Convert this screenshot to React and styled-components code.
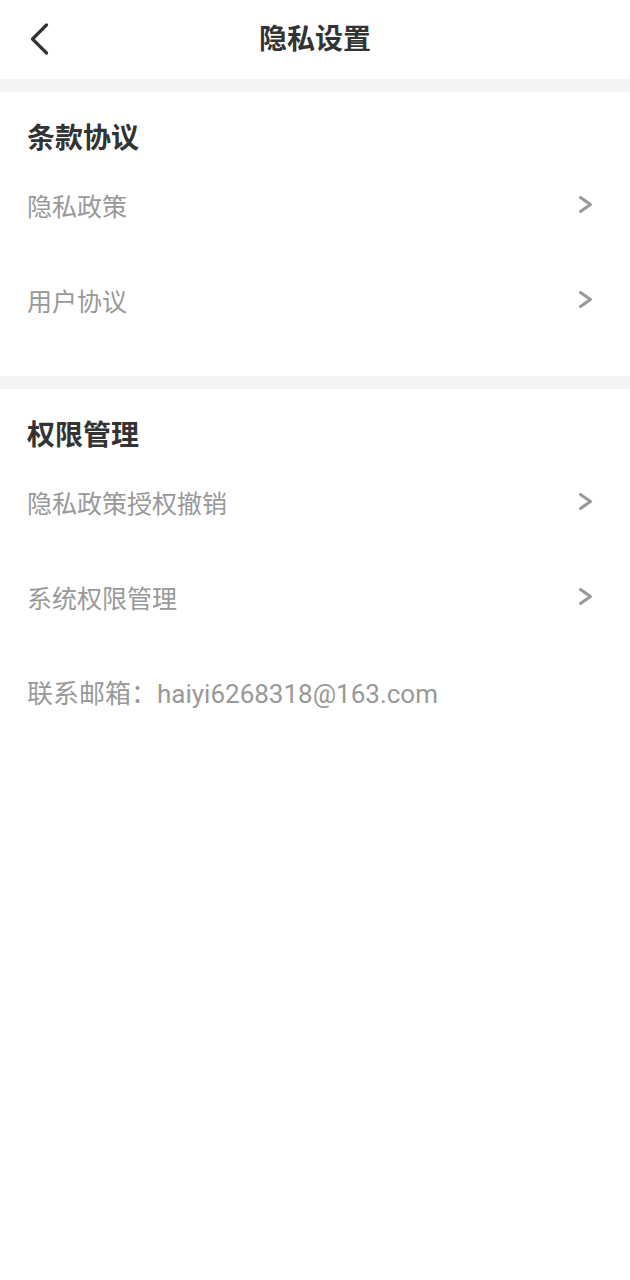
import React from 'react'
import styled, { createGlobalStyle } from 'styled-components'

const GlobalStyle = createGlobalStyle`
  html, body {
    margin: 0;
    padding: 0;
    background: #fff;
  }
  body {
    font-family: Roboto, "Noto Sans CJK SC", "Noto Sans", sans-serif;
  }
`

const Page = styled.div`
  width: 630px;
  min-height: 1280px;
  background: #fff;
`

const Header = styled.div`
  height: 79px;
  display: flex;
  align-items: center;
  justify-content: center;
  position: relative;
`

const BackButton = styled.div`
  position: absolute;
  left: 30px;
  top: 23px;
  width: 19px;
  height: 32px;
  display: flex;
`

const HeaderTitle = styled.h1`
  margin: 0;
  font-size: 28px;
  font-weight: 700;
  color: #333;
  line-height: 1;
`

const Divider = styled.div`
  height: 13px;
  background: #f4f4f4;
`

const Section = styled.div`
  padding: 32px 0 ${p => p.$bottom || 0}px;
`

const SectionTitle = styled.div`
  padding: 0 27px;
  margin-bottom: 3px;
  font-size: 28px;
  line-height: 30px;
  font-weight: 700;
  color: #333;
`

const Row = styled.div`
  height: 95px;
  padding: 0 37px 0 27px;
  display: flex;
  align-items: center;
  justify-content: space-between;
`

const RowLabel = styled.span`
  font-size: ${p => p.$size || 25}px;
  color: #999;
`

const Chevron = () => (
  <svg width="15" height="19" viewBox="0 0 15 19">
    <polyline points="2.5,2.5 12.5,9.5 2.5,16.5" fill="none" stroke="#999" strokeWidth="3" strokeLinecap="round" strokeLinejoin="round" />
  </svg>
)

const BackIcon = () => (
  <svg width="19" height="32" viewBox="0 0 19 32">
    <polyline points="16.5,2 2.5,16 16.5,30" fill="none" stroke="#333" strokeWidth="3.2" strokeLinecap="round" strokeLinejoin="round" />
  </svg>
)

const sections = [
  { title: '条款协议', items: ['隐私政策', '用户协议'] },
  { title: '权限管理', items: ['隐私政策授权撤销', '系统权限管理'] },
]

const App = () => {
  return (
    <Page>
      <GlobalStyle />
      <Header>
        <BackButton><BackIcon /></BackButton>
        <HeaderTitle>隐私设置</HeaderTitle>
      </Header>
      <Divider />
      <Section $bottom={29}>
        <SectionTitle>{sections[0].title}</SectionTitle>
        {sections[0].items.map(item => (
          <Row key={item}>
            <RowLabel>{item}</RowLabel>
            <Chevron />
          </Row>
        ))}
      </Section>
      <Divider />
      <Section>
        <SectionTitle>{sections[1].title}</SectionTitle>
        {sections[1].items.map(item => (
          <Row key={item}>
            <RowLabel>{item}</RowLabel>
            <Chevron />
          </Row>
        ))}
        <Row>
          <RowLabel $size={26}>联系邮箱：haiyi6268318@163.com</RowLabel>
        </Row>
      </Section>
    </Page>
  )
}

export default App
